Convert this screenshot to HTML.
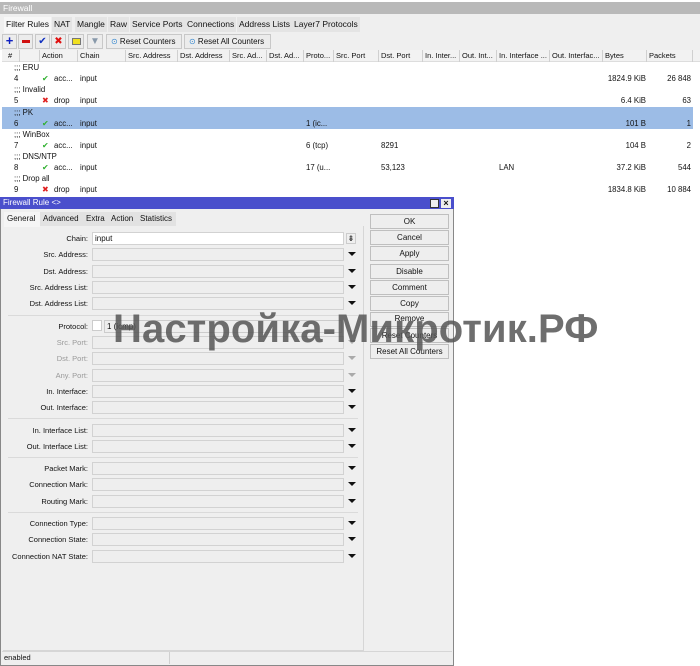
<!DOCTYPE html>
<html><head><meta charset="utf-8"><style>
*{box-sizing:border-box;margin:0;padding:0}
body{width:700px;height:666px;overflow:hidden;background:#fff;font-family:"Liberation Sans",sans-serif;font-size:8px;color:#111;position:relative}
.a{position:absolute;white-space:nowrap}
.tb{background:#b9b9b9;color:#fff;font-size:8.5px;padding:2px 3px}
.tab{position:absolute;top:17px;height:15px;line-height:15px;font-size:8.5px;padding:0 2px;background:#e4e4e4}
.btn{position:absolute;background:#ececec;border:1px solid #c8c8c8;height:15px}
.hd{position:absolute;top:50px;height:12px;line-height:12px;font-size:7.5px;padding-left:2px;border-right:1px solid #d0d0d0;overflow:hidden;white-space:nowrap}
.row{position:absolute;left:2px;width:691px;height:11px;line-height:11px;font-size:7.8px}
.row span{position:absolute;top:0;white-space:nowrap}
.row .b{left:560px;width:84px;text-align:right}
.row .p{left:600px;width:89px;text-align:right}
.lbl{position:absolute;width:88px;text-align:right;font-size:7.5px;left:0}
.fld{position:absolute;left:92px;width:252px;height:13px;border:1px solid #d2d2d2;background:#eeeeee}
.arr{position:absolute;left:348px;width:0;height:0;border-left:4px solid transparent;border-right:4px solid transparent;border-top:4px solid #111}
.db{position:absolute;left:370px;width:79px;height:15px;border:1px solid #bfbfbf;background:#eeeeee;text-align:center;line-height:13px;font-size:8px}
.sep{position:absolute;left:8px;width:350px;height:1px;background:#dadada}
</style></head><body>
<div class="a tb" style="left:0;top:2px;width:700px;height:12px;line-height:9px">Firewall</div>
<div class="a" style="left:0;top:14px;width:700px;height:36px;background:#efefef"></div>
<div class="tab" style="left:4px;background:#f7f7f7;height:16px">Filter Rules</div>
<div class="tab" style="left:52px">NAT</div>
<div class="tab" style="left:75px">Mangle</div>
<div class="tab" style="left:108px">Raw</div>
<div class="tab" style="left:130px">Service Ports</div>
<div class="tab" style="left:185px">Connections</div>
<div class="tab" style="left:237px">Address Lists</div>
<div class="tab" style="left:292px">Layer7 Protocols</div>
<div class="btn" style="left:2px;top:34px;width:15px;color:#1020c0;font-weight:bold;font-size:13px;line-height:11px;text-align:center">+</div>
<div class="btn" style="left:18px;top:34px;width:15px"><div style="position:absolute;left:3px;top:5px;width:8px;height:3px;background:#d01010"></div></div>
<div class="btn" style="left:35px;top:34px;width:15px;color:#1030c0;font-size:10px;text-align:center;line-height:13px">✔</div>
<div class="btn" style="left:51px;top:34px;width:15px;color:#e01010;font-size:10px;text-align:center;line-height:13px">✖</div>
<div class="btn" style="left:68px;top:34px;width:16px"><div style="position:absolute;left:3px;top:3px;width:9px;height:7px;background:#f0e020;border:1px solid #777"></div></div>
<div class="btn" style="left:87px;top:34px;width:16px;color:#8899aa;text-align:center;font-size:10px;line-height:13px">▼</div>
<div class="btn" style="left:106px;top:34px;width:76px;line-height:13px;font-size:8px;padding-left:4px"><span style="color:#3a8ad0">⊙</span> Reset Counters</div>
<div class="btn" style="left:184px;top:34px;width:87px;line-height:13px;font-size:8px;padding-left:4px"><span style="color:#3a8ad0">⊙</span> Reset All Counters</div>
<div class="a" style="left:2px;top:50px;width:698px;height:12px;background:#f2f2f2;border-bottom:1px solid #ddd"></div>
<div class="hd" style="left:2px;width:18px;padding-left:6px">#</div>
<div class="hd" style="left:20px;width:20px"></div>
<div class="hd" style="left:40px;width:38px">Action</div>
<div class="hd" style="left:78px;width:48px">Chain</div>
<div class="hd" style="left:126px;width:52px">Src. Address</div>
<div class="hd" style="left:178px;width:52px">Dst. Address</div>
<div class="hd" style="left:230px;width:37px">Src. Ad...</div>
<div class="hd" style="left:267px;width:37px">Dst. Ad...</div>
<div class="hd" style="left:304px;width:30px">Proto...</div>
<div class="hd" style="left:334px;width:45px">Src. Port</div>
<div class="hd" style="left:379px;width:44px">Dst. Port</div>
<div class="hd" style="left:423px;width:37px">In. Inter...</div>
<div class="hd" style="left:460px;width:37px">Out. Int...</div>
<div class="hd" style="left:497px;width:53px">In. Interface ...</div>
<div class="hd" style="left:550px;width:53px">Out. Interfac...</div>
<div class="hd" style="left:603px;width:44px">Bytes</div>
<div class="hd" style="left:647px;width:46px">Packets</div>

<div class="row" style="top:62px"><span style="left:12px">;;; ERU</span></div>
<div class="row" style="top:73px"><span style="left:12px">4</span><span style="left:40px;color:#30b030">✔</span><span style="left:52px">acc...</span><span style="left:78px">input</span><span class="b">1824.9 KiB</span><span class="p">26 848</span></div>
<div class="row" style="top:84px"><span style="left:12px">;;; Invalid</span></div>
<div class="row" style="top:95px"><span style="left:12px">5</span><span style="left:40px;color:#e02020">✖</span><span style="left:52px">drop</span><span style="left:78px">input</span><span class="b">6.4 KiB</span><span class="p">63</span></div>
<div class="row" style="top:107px;background:#9cbce6"><span style="left:12px">;;; PK</span></div>
<div class="row" style="top:118px;background:#9cbce6"><span style="left:12px">6</span><span style="left:40px;color:#30b030">✔</span><span style="left:52px">acc...</span><span style="left:78px">input</span><span style="left:304px">1 (ic...</span><span class="b">101 B</span><span class="p">1</span></div>
<div class="row" style="top:129px"><span style="left:12px">;;; WinBox</span></div>
<div class="row" style="top:140px"><span style="left:12px">7</span><span style="left:40px;color:#30b030">✔</span><span style="left:52px">acc...</span><span style="left:78px">input</span><span style="left:304px">6 (tcp)</span><span style="left:379px">8291</span><span class="b">104 B</span><span class="p">2</span></div>
<div class="row" style="top:151px"><span style="left:12px">;;; DNS/NTP</span></div>
<div class="row" style="top:162px"><span style="left:12px">8</span><span style="left:40px;color:#30b030">✔</span><span style="left:52px">acc...</span><span style="left:78px">input</span><span style="left:304px">17 (u...</span><span style="left:379px">53,123</span><span style="left:497px">LAN</span><span class="b">37.2 KiB</span><span class="p">544</span></div>
<div class="row" style="top:173px"><span style="left:12px">;;; Drop all</span></div>
<div class="row" style="top:184px"><span style="left:12px">9</span><span style="left:40px;color:#e02020">✖</span><span style="left:52px">drop</span><span style="left:78px">input</span><span class="b">1834.8 KiB</span><span class="p">10 884</span></div>

<!-- dialog -->
<div class="a" style="left:0;top:197px;width:454px;height:469px;background:#efefef;border:1px solid #888"></div>
<div class="a" style="left:0;top:197px;width:454px;height:12px;background:#4a4fcc;color:#fff;font-size:8px;line-height:12px;padding-left:3px">Firewall Rule &lt;&gt;</div>
<div class="a" style="left:430px;top:199px;width:9px;height:9px;background:#eee;border:1px solid #333"></div>
<div class="a" style="left:441px;top:199px;width:10px;height:9px;background:#eee;font-size:9px;line-height:8px;text-align:center;font-weight:bold">×</div>
<div class="a" style="left:4px;top:212px;width:172px;height:14px;background:#e2e2e2"></div>
<div class="a" style="left:4px;top:212px;width:36px;height:15px;background:#f5f5f5;font-size:8px;line-height:14px;padding-left:3px">General</div>
<div class="a" style="left:43px;top:212px;font-size:8px;line-height:14px">Advanced</div>
<div class="a" style="left:86px;top:212px;font-size:8px;line-height:14px">Extra</div>
<div class="a" style="left:111px;top:212px;font-size:8px;line-height:14px">Action</div>
<div class="a" style="left:140px;top:212px;font-size:8px;line-height:14px">Statistics</div>
<div class="a" style="left:3px;top:226px;width:361px;height:425px;border-right:1px solid #d6d6d6;border-bottom:1px solid #d6d6d6"></div>

<div class="lbl" style="top:234px">Chain:</div><div class="fld" style="top:232px;background:#fff;font-size:8px;line-height:11px;padding-left:2px">input</div>
<div class="a" style="left:346px;top:233px;width:10px;height:11px;border:1px solid #ccc;font-size:8px;line-height:9px;text-align:center">⇟</div>
<div class="lbl" style="top:250px">Src. Address:</div><div class="fld" style="top:248px"></div><div class="arr" style="top:252px"></div>
<div class="lbl" style="top:267px">Dst. Address:</div><div class="fld" style="top:265px"></div><div class="arr" style="top:269px"></div>
<div class="lbl" style="top:283px">Src. Address List:</div><div class="fld" style="top:281px"></div><div class="arr" style="top:285px"></div>
<div class="lbl" style="top:299px">Dst. Address List:</div><div class="fld" style="top:297px"></div><div class="arr" style="top:301px"></div>
<div class="sep" style="top:315px"></div>
<div class="lbl" style="top:322px">Protocol:</div>
<div class="a" style="left:92px;top:320px;width:10px;height:11px;background:#fff;border:1px solid #ccc"></div>
<div class="a" style="left:104px;top:320px;width:238px;height:13px;border:1px solid #ccc;font-size:8px;line-height:11px;padding-left:2px;background:#eee">1 (icmp)</div>
<div class="lbl" style="top:338px;color:#999">Src. Port:</div><div class="fld" style="top:336px"></div><div class="arr" style="top:340px;border-top-color:#aaa"></div>
<div class="lbl" style="top:354px;color:#999">Dst. Port:</div><div class="fld" style="top:352px"></div><div class="arr" style="top:356px;border-top-color:#aaa"></div>
<div class="lbl" style="top:371px;color:#999">Any. Port:</div><div class="fld" style="top:369px"></div><div class="arr" style="top:373px;border-top-color:#aaa"></div>
<div class="lbl" style="top:387px">In. Interface:</div><div class="fld" style="top:385px"></div><div class="arr" style="top:389px"></div>
<div class="lbl" style="top:403px">Out. Interface:</div><div class="fld" style="top:401px"></div><div class="arr" style="top:405px"></div>
<div class="sep" style="top:418px"></div>
<div class="lbl" style="top:426px">In. Interface List:</div><div class="fld" style="top:424px"></div><div class="arr" style="top:428px"></div>
<div class="lbl" style="top:442px">Out. Interface List:</div><div class="fld" style="top:440px"></div><div class="arr" style="top:444px"></div>
<div class="sep" style="top:457px"></div>
<div class="lbl" style="top:464px">Packet Mark:</div><div class="fld" style="top:462px"></div><div class="arr" style="top:466px"></div>
<div class="lbl" style="top:480px">Connection Mark:</div><div class="fld" style="top:478px"></div><div class="arr" style="top:482px"></div>
<div class="lbl" style="top:497px">Routing Mark:</div><div class="fld" style="top:495px"></div><div class="arr" style="top:499px"></div>
<div class="sep" style="top:512px"></div>
<div class="lbl" style="top:519px">Connection Type:</div><div class="fld" style="top:517px"></div><div class="arr" style="top:521px"></div>
<div class="lbl" style="top:535px">Connection State:</div><div class="fld" style="top:533px"></div><div class="arr" style="top:537px"></div>
<div class="lbl" style="top:552px">Connection NAT State:</div><div class="fld" style="top:550px"></div><div class="arr" style="top:554px"></div>

<div class="db" style="top:214px">OK</div>
<div class="db" style="top:230px">Cancel</div>
<div class="db" style="top:246px">Apply</div>
<div class="db" style="top:264px">Disable</div>
<div class="db" style="top:280px">Comment</div>
<div class="db" style="top:296px">Copy</div>
<div class="db" style="top:312px;line-height:11px">Remove</div>
<div class="db" style="top:328px">Reset Counters</div>
<div class="db" style="top:344px">Reset All Counters</div>

<div class="a" style="left:2px;top:651px;width:450px;height:13px;border-top:1px solid #d6d6d6"></div>
<div class="a" style="left:3px;top:652px;width:167px;height:12px;border-right:1px solid #d0d0d0;font-size:7.5px;line-height:12px;padding-left:1px">enabled</div>

<div class="a" style="left:113px;top:307px;font-size:40px;font-weight:bold;color:rgba(85,85,85,0.85);line-height:44px;letter-spacing:0.1px">Настройка-Микротик.РФ</div>
</body></html>
